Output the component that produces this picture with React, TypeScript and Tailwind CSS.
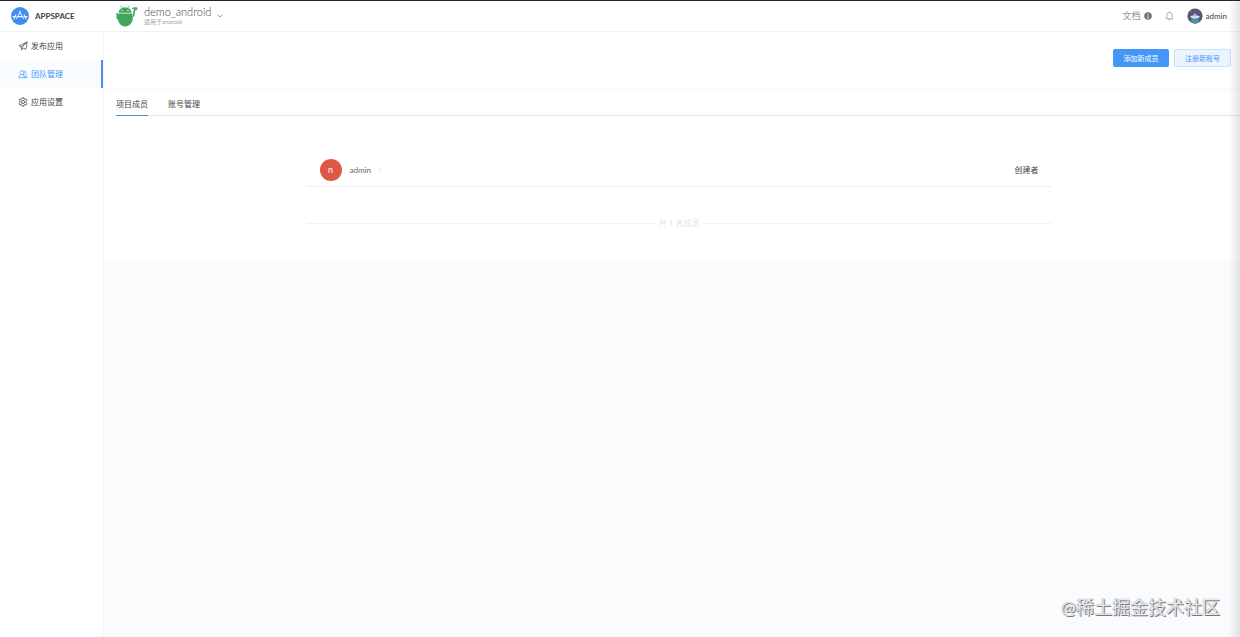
import { useState } from "react";
import clsx from "clsx";

interface Member {
  id: string;
  name: string;
  initial: string;
  role: string;
}

const members: Member[] = [{ id: "1", name: "admin", initial: "n", role: "创建者" }];

const tabs = ["项目成员", "账号管理"];

function LogoIcon() {
  return (
    <svg viewBox="0 0 18 18" className="h-[18px] w-[18px] shrink-0" fill="none" aria-hidden="true">
      <circle cx="9" cy="9" r="9" fill="#3f8def" />
      <g stroke="#e9f3ff" strokeLinecap="round" strokeLinejoin="round">
        <path d="M5.4 11.6 9.7 4.4M12.6 11.6 8.3 4.4" strokeWidth="1" />
        <path d="M1.9 9.7h3.2M7.2 9.7h3.6M13 9.7h3.1" strokeWidth="1.3" />
        <path d="M3 12 4.9 7.6M15 12l-1.9-4.4" strokeWidth="1" />
      </g>
    </svg>
  );
}

function AndroidIcon() {
  return (
    <svg viewBox="0 0 22 22" className="h-[22px] w-[22px] shrink-0" aria-hidden="true">
      <g stroke="#3fa757" strokeLinecap="round" fill="none">
        <path d="M4.8.9 6.2 3.2M13 .9l-1.3 2.3" strokeWidth="0.7" />
        <path d="M1.3 8.6v5" strokeWidth="1.6" />
        <path d="M17.4 11 18.6 4.6" strokeWidth="1.6" />
        <path d="M17 3.4c1-.5 2.6-.5 3.8 0M20 2.8v2" strokeWidth="1.6" />
      </g>
      <path d="M2.6 7.7C2.8 4.6 5.4 2.6 9 2.6s6.2 2 6.6 5.1Z" fill="#3fa757" />
      <path d="M2.4 8.4h13.6c.7 2 1 3.8.7 5.6-.6 4.4-3.4 7.4-7.5 7.4s-6.8-3-7.3-7.4c-.2-1.8 0-3.8.5-5.6Z" fill="#3fa757" />
      <circle cx="6" cy="5.4" r="0.7" fill="#fff" />
      <circle cx="12" cy="5.4" r="0.7" fill="#fff" />
    </svg>
  );
}

function SendIcon() {
  return (
    <svg viewBox="0 0 10 10" className="h-[10px] w-[10px] shrink-0" fill="none" stroke="currentColor" strokeWidth="0.7" strokeLinejoin="round" aria-hidden="true">
      <path d="M9.2 1 .9 4.9l2.2 1.2L9.2 1ZM9.2 1 7.8 8.3 4.9 6.8M9.2 1 3.5 6.3v2.8l1.6-2.2" />
    </svg>
  );
}

function TeamIcon() {
  return (
    <svg viewBox="0 0 10 10" className="h-[10px] w-[10px] shrink-0" fill="none" stroke="currentColor" strokeWidth="0.7" strokeLinecap="round" strokeLinejoin="round" aria-hidden="true">
      <circle cx="4" cy="3.7" r="2" />
      <path d="M.9 8.6c.1-1.6 1-2.6 2.2-2.9M5 5.7c1.2.3 2 1.3 2.1 2.9ZM.9 8.6h6.2" />
      <path d="M6.2 1.9a1.9 1.9 0 0 1 1 3.5c1.2.4 1.9 1.5 2 3.2H8" />
    </svg>
  );
}

function GearIcon() {
  return (
    <svg viewBox="0 0 10 10" className="h-[10px] w-[10px] shrink-0" fill="none" stroke="currentColor" strokeWidth="0.8" strokeLinejoin="round" aria-hidden="true">
      <path d="m4.2.8 1.6 0 .3 1.1.8.4 1.1-.4.9 1.4-.8.8v1.8l.8.8-.9 1.4-1.1-.4-.8.4-.3 1.1H4.2l-.3-1.1-.8-.4-1.1.4-.9-1.4.8-.8V4.1l-.8-.8L2 1.9l1.1.4.8-.4Z" />
      <circle cx="5" cy="5" r="1.6" />
    </svg>
  );
}

function BellIcon() {
  return (
    <svg viewBox="0 0 9 10" className="h-[10px] w-[9px]" fill="none" stroke="#8c8c8c" strokeWidth="0.7" strokeLinejoin="round" aria-hidden="true">
      <path d="M4.5.6v.8M1 7.8h7L7.2 6.5V4.1a2.7 2.7 0 0 0-5.4 0v2.4ZM3.6 8.3c.2 1 1.6 1 1.8 0" />
    </svg>
  );
}

function Avatar() {
  return (
    <svg viewBox="0 0 16 16" className="h-4 w-4" aria-hidden="true">
      <circle cx="8" cy="8" r="7.6" fill="#5f4f79" />
      <path d="M3.6 14.1a7.6 7.6 0 0 0 8.8 0L10.6 9.6H5.4Z" fill="#4b90a5" />
      <ellipse cx="8" cy="9" rx="4.6" ry="1.4" fill="#d7e4ee" />
      <path d="M5.9 8.2a2.1 2.6 0 0 1 4.2 0Z" fill="#8bc4dc" />
      <path d="M4 3.8 5 3M11.6 4.5l.8.5" stroke="#bd7c9a" strokeWidth="0.8" />
    </svg>
  );
}

const menu = [
  { label: "发布应用", icon: <SendIcon /> },
  { label: "团队管理", icon: <TeamIcon /> },
  { label: "应用设置", icon: <GearIcon /> },
];

export default function App() {
  const [activeMenu, setActiveMenu] = useState("团队管理");
  const [activeTab, setActiveTab] = useState("项目成员");

  return (
    <div className="relative flex min-h-screen flex-col border-t border-[#252529] bg-[#fafbfd] font-['Lato','Noto_Sans_CJK_SC',sans-serif] text-[8px] text-[#404348]">
      <header className="flex h-[31px] items-center border-b border-[#f1f2f3] bg-white">
        <a href="#home" className="flex w-[104px] shrink-0 items-center gap-[6px] pl-[11px]">
          <LogoIcon />
          <span className="text-[8px] font-bold">APPSPACE</span>
        </a>

        <button type="button" className="flex items-center gap-[6px] pl-3 text-left">
          <AndroidIcon />
          <span className="flex flex-col">
            <span className="text-[11px] leading-[12px] font-light">demo_android</span>
            <span className="text-[6px] leading-[8px] text-[#a2a4a7]">适用于android</span>
          </span>
          <svg viewBox="0 0 6 4" className="h-1 w-[6px]" fill="none" stroke="#88898c" strokeWidth="0.8" aria-hidden="true">
            <path d="m.5.5 2.5 2.6L5.5.5" />
          </svg>
        </button>

        <div className="ml-auto flex items-center gap-[13px] pr-[13px]">
          <a href="#docs" className="flex items-center gap-[3px] text-[9px] text-[#929292]">
            文档
            <svg viewBox="0 0 8 8" className="h-2 w-2" aria-hidden="true">
              <circle cx="4" cy="4" r="3.8" fill="#737477" />
              <path d="M4 1.7v.9M3.4 3.6H4v2.5M3.3 6.1h1.4" stroke="#fff" strokeWidth="0.8" />
            </svg>
          </a>
          <button type="button" aria-label="通知">
            <BellIcon />
          </button>
          <button type="button" className="flex items-center gap-[3px] text-[8px]">
            <Avatar />
            admin
          </button>
        </div>
      </header>

      <div className="flex flex-1">
        {/* Sidebar */}
        <nav className="flex w-[104px] shrink-0 flex-col border-r border-[#f3f5f7] bg-white">
          {menu.map((item) => (
            <a
              key={item.label}
              href="#menu"
              onClick={() => setActiveMenu(item.label)}
              className={clsx(
                "flex h-7 items-center gap-[3px] border-r-2 pl-[18px]",
                activeMenu === item.label ? "border-[#4a90f0] bg-[#f8fcff] text-[#4596f5]" : "border-transparent"
              )}
            >
              {item.icon}
              {item.label}
            </a>
          ))}
        </nav>

        <main className="min-w-0 flex-1">
          {/* Actions */}
          <div className="flex h-14 items-start justify-end gap-[5px] bg-white pt-[17px] pr-[9px] text-[7px]">
            <button type="button" className="h-[18px] w-14 rounded-[2px] bg-[#4597f7] text-white">
              添加新成员
            </button>
            <button type="button" className="h-[18px] w-[57px] rounded-[2px] border border-[#c9e0fa] bg-[#ebf4fe] text-[#4597f7]">
              注册新账号
            </button>
          </div>

          <section className="border-t-4 border-[#fafbfc] bg-white pb-[31px]">
            <div className="ml-3 flex h-6 gap-5 border-b border-[#dfe5e9]">
              {tabs.map((tab) => (
                <button
                  key={tab}
                  type="button"
                  onClick={() => setActiveTab(tab)}
                  className="-mb-px flex flex-col"
                >
                  <span className="flex flex-1 items-center">{tab}</span>
                  <span className={clsx("h-px w-full", activeTab === tab && "bg-[#3c91d3]")} />
                </button>
              ))}
            </div>

            <div className="pt-[38px] pl-[14px]">
              <div className="mx-auto max-w-[745px]">
                <ul>
                  {members.map((member) => (
                    <li key={member.id} className="flex h-[33px] items-center border-b border-[#edeef0] px-[13px]">
                      <span className="flex h-[22px] w-[22px] items-center justify-center rounded-full bg-[#df5845] text-[9px] text-white">
                        {member.initial}
                      </span>
                      <span className="ml-2 text-[8px] text-[#68696b]">{member.name}</span>
                      <span className="ml-2 h-[5px] w-[3px] border-t border-l border-[#ebecef]" />
                      <span className="ml-auto">{member.role}</span>
                    </li>
                  ))}
                </ul>

                <div className="mt-[30px] flex h-3 items-center gap-1 text-[#e1e4e7]">
                  <span className="h-px flex-1 bg-[#f2f3f4]" />
                  共 {members.length} 名成员
                  <span className="h-px flex-1 bg-[#f2f3f4]" />
                </div>
              </div>
            </div>
          </section>
        </main>
      </div>

      {/* Edge shade and watermark */}
      <div className="pointer-events-none absolute inset-y-0 right-0 w-3 bg-linear-to-r from-transparent to-black/10" />
      <p className="pointer-events-none absolute right-5 bottom-[18px] text-[18px] leading-6 text-[#e8e8ea] [text-shadow:1px_1px_0_#77777a,0_0_1px_#8a8a8c]">
        @稀土掘金技术社区
      </p>
    </div>
  );
}
